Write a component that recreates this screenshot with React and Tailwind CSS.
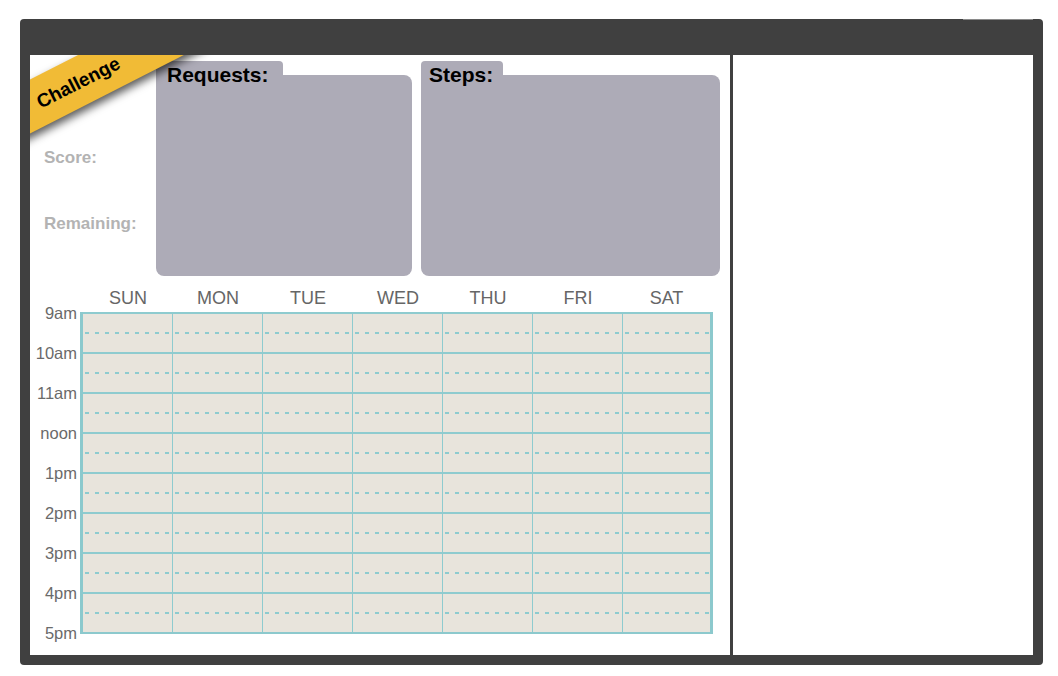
import React from 'react';

const days = ['SUN', 'MON', 'TUE', 'WED', 'THU', 'FRI', 'SAT'];
const hours = ['9am', '10am', '11am', 'noon', '1pm', '2pm', '3pm', '4pm', '5pm'];

const Panel = ({ title, width, tab, pad, className = '' }) => (
    <div className={`flex flex-col ${width} ${className}`}>
        <div className={`relative z-10 h-[14px] ${tab} ${pad} bg-[#adabb7] rounded-t-[4px] pt-[3px] text-[21px] leading-[21px] font-bold text-black whitespace-nowrap`}>
            {title}
        </div>
        <div className="h-[201px] bg-[#adabb7] rounded-[8px] rounded-tl-none" />
    </div>
);

export default function App() {
    return (
        <div className="w-[1058px] h-[676px] bg-white pt-[19px] pl-[20px] font-['Liberation_Sans',Arial,sans-serif]">
            <div className="relative w-[1023px] h-[646px] bg-[#404040] rounded-[4px] pt-[36px] px-[10px] pb-[10px] flex gap-[3px]">
                <div className="absolute top-0 right-[10px] w-[70px] h-px bg-[#8a8a8a]" />

                {/* left side: challenge board */}
                <div className="relative w-[700px] h-full bg-white flex flex-col">
                    <div className="absolute z-20 top-0 left-0 w-[220px] h-[160px] overflow-hidden pointer-events-none">
                        <div className="absolute left-[-82px] top-[3px] w-[260px] h-[48px] bg-[#f1bb36] -rotate-[27deg] shadow-[0_5px_8px_rgba(0,0,0,0.65)] flex items-center justify-center pt-[2px] text-[19px] leading-[22px] font-bold text-black">
                            Challenge
                        </div>
                    </div>

                    <div className="flex h-[221px] pt-[6px]">
                        <div className="w-[126px] pl-[14px] pt-[87px] text-[17px] leading-[20px] font-bold text-[#b3b3b3]">
                            <div>Score:</div>
                            <div className="mt-[46px]">Remaining:</div>
                        </div>
                        <Panel title="Requests:" width="w-[256px]" tab="w-[127px]" pad="pl-[11px]" />
                        <Panel title="Steps:" width="w-[299px]" tab="w-[82px]" pad="pl-[8px]" className="ml-[9px]" />
                    </div>

                    <div className="mt-[12px] pl-[53px] grid grid-cols-[repeat(6,90px)_87px] h-[20px] text-[18px] leading-[20px] text-[#666]">
                        {days.map((d) => (
                            <div key={d} className="text-center">{d}</div>
                        ))}
                    </div>

                    <div className="mt-[4px] flex">
                        <div className="w-[50px] -mt-[9px] flex flex-col text-[16.5px] leading-[20px] text-[#6a6a6a]">
                            {hours.map((h) => (
                                <div key={h} className="h-[40px] shrink-0 text-right pr-[3px]">{h}</div>
                            ))}
                        </div>
                        <div className="self-start border-l-[3px] border-r-[3px] border-b-2 border-[#8cc9cd]">
                            {hours.slice(0, 8).map((h) => (
                                <div
                                    key={h}
                                    className="h-[40px] border-t-2 border-[#8ecbcf] bg-[#e8e4dc] bg-[image:repeating-linear-gradient(90deg,#8ecbcf_0px,#8ecbcf_4px,transparent_4px,transparent_10px)] bg-no-repeat bg-[length:100%_2px] bg-[position:2px_18px] grid grid-cols-[repeat(6,90px)_87px]"
                                >
                                    {days.map((d, i) => (
                                        <div key={d} className={i < 6 ? 'border-r border-[#8ecbcf]' : ''} />
                                    ))}
                                </div>
                            ))}
                        </div>
                    </div>
                </div>

                {/* right side */}
                <div className="w-[300px] h-full bg-white" />
            </div>
        </div>
    );
}
